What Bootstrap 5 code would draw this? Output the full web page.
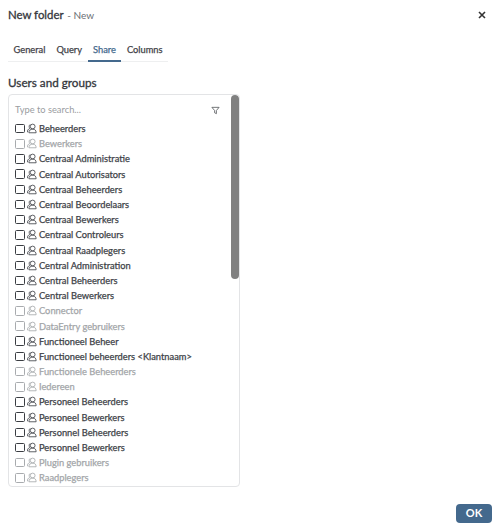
<!DOCTYPE html>
<html lang="en"><head><meta charset="utf-8"><title>New folder</title>
<link href="https://cdn.jsdelivr.net/npm/bootstrap@5.3.0/dist/css/bootstrap.min.css" rel="stylesheet">
<style>
html,body{height:100%;overflow:hidden;background:#fff}
body{font-family:Lato,"Liberation Sans",sans-serif;color:#3c3f44;font-size:10px}
.dlg{width:500px;height:532px;padding:7px 8px 8px}
.dlg-title{font-size:11.400px;font-weight:400;-webkit-text-stroke:.3px currentColor;line-height:16px;color:#33363b}
.dlg-sub{font-size:10px;color:#6b6f75;font-weight:400;margin-left:1px;-webkit-text-stroke:0}
.dlg-x{width:10px;height:10px;margin:3px 5px 0 0;color:#333}
.tabbar{margin-top:14px;width:160px;border-bottom:1px solid #eeeff0;height:25px}
.tabitem{padding:0 5.500px;height:25px;line-height:26px;font-size:9.300px;-webkit-text-stroke:.25px currentColor;color:#3f4247}
.tabitem.on{color:#44698d;border-bottom:2px solid #44698d}
.sect{font-size:11.700px;-webkit-text-stroke:.3px currentColor;margin-top:12px;line-height:16px;color:#33363b;margin-bottom:4px}
.panel{width:232px;height:393px;flex:none;border:1px solid #e3e4e6;border-radius:4px;position:relative;overflow:hidden;padding:0 0 0 6px}
.thumb{position:absolute;top:0;right:0;width:8px;height:184px;background:#808080;border-radius:4px}
.srch{height:26px;padding:4px 19px 0 0;color:#9a9da1;font-size:9.300px}
.rows{height:365px;overflow:hidden}
.rowi{height:15.2px;gap:2.500px;font-size:9.300px;-webkit-text-stroke:.25px currentColor;color:#404348;white-space:nowrap;line-height:15px}
.rowi.off{color:#a3a6a9}
.chk{width:9.500px;height:9.500px;border:1.4px solid #3a3d42;border-radius:1.5px}
.off .chk{border-color:#a8abae}
.ug{width:9.500px;height:11px;color:#44474c;-webkit-text-stroke:0}
.off .ug{color:#a8abae}
.okbtn{width:36px;height:18.500px;padding:0;background:#44698d;color:#fff;border:0;border-radius:4px;font-size:11px;font-weight:700;line-height:18px}
.foot{margin-top:17px}
</style></head>
<body>
<div class="dlg d-flex flex-column">
 <div class="d-flex justify-content-between align-items-start">
  <div class="dlg-title">New folder<span class="dlg-sub"> - New</span></div>
  <svg class="dlg-x" viewBox="0 0 10 10"><path d="M2 2l6 6M8 2l-6 6" stroke="currentColor" stroke-width="1.6" fill="none"/></svg>
 </div>
 <div class="tabbar d-flex">
  <div class="tabitem">General</div><div class="tabitem">Query</div><div class="tabitem on">Share</div><div class="tabitem">Columns</div>
 </div>
 <div class="sect">Users and groups</div>
 <div class="panel">
  <div class="thumb"></div>
  <div class="srch d-flex align-items-center justify-content-between"><span>Type to search...</span>
   <svg width="9" height="9" viewBox="0 0 10 10"><path d="M1 1.500h8L6 5v3.500L4 7.500V5z" stroke="#55585c" stroke-width=".9" fill="none"/></svg></div>
  <div class="rows" id="rows"></div>
 </div>
 <div class="foot d-flex justify-content-end"><button class="okbtn btn">OK</button></div>
</div>
<template id="ico"><svg class="ug" viewBox="0 0 10 11"><circle cx="6" cy="3.4" r="2.5" fill="none" stroke="currentColor" stroke-width=".9"/><path d="M2 10c0-2.500 1.500-3.800 4-3.800s3.600 1.300 3.600 3.800z" fill="none" stroke="currentColor" stroke-width=".9"/><path d="M3.400 1.200C2 2 2 4.300 3 5.500 1.200 6 .4 7.500.4 9.500" fill="none" stroke="currentColor" stroke-width=".9"/></svg></template>
<script>
var d=[["Beheerders"],["Bewerkers",1],["Centraal Administratie"],["Centraal Autorisators"],["Centraal Beheerders"],["Centraal Beoordelaars"],["Centraal Bewerkers"],["Centraal Controleurs"],["Centraal Raadplegers"],["Central Administration"],["Central Beheerders"],["Central Bewerkers"],["Connector",1],["DataEntry gebruikers",1],["Functioneel Beheer"],["Functioneel beheerders <Klantnaam>"],["Functionele Beheerders",1],["Iedereen",1],["Personeel Beheerders"],["Personeel Bewerkers"],["Personnel Beheerders"],["Personnel Bewerkers"],["Plugin gebruikers",1],["Raadplegers",1]];
var r=document.getElementById('rows'),t=document.getElementById('ico');
d.forEach(function(x){var e=document.createElement('div');e.className='rowi d-flex align-items-center'+(x[1]?' off':'');
var c=document.createElement('span');c.className='chk';e.appendChild(c);e.appendChild(t.content.cloneNode(true));
var s=document.createElement('span');s.textContent=x[0];e.appendChild(s);r.appendChild(e);});
</script>
<script src="https://cdn.jsdelivr.net/npm/bootstrap@5.3.0/dist/js/bootstrap.bundle.min.js"></script>
</body></html>
